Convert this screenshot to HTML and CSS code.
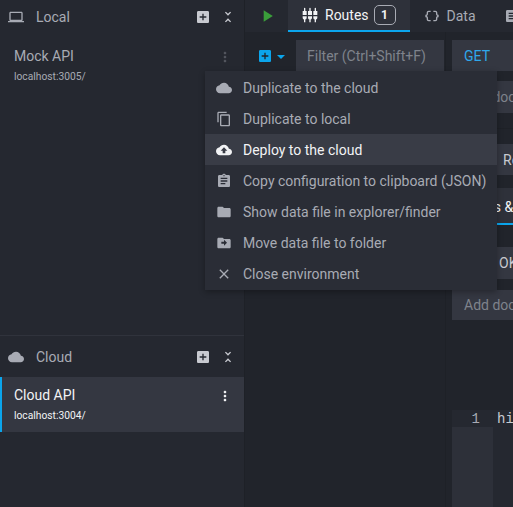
FILE: index.html
```html
<!DOCTYPE html>
<html lang="en">

<head>
    <meta charset="UTF-8">
    <title>Environments</title>
    <link rel="stylesheet" href="styles.css">
</head>

<body>
    <div class="app">
        <aside class="sidebar">
            <section class="env-group env-group-local">
                <header class="group-head">
                    <svg class="icon group-icon" viewBox="0 0 24 24"><path d="M20 18c1.1 0 1.99-.9 1.99-2L22 6c0-1.1-.9-2-2-2H4c-1.1 0-2 .9-2 2v10c0 1.1.9 2 2 2H0v2h24v-2h-4zM4 6h16v10H4V6z"/></svg>
                    <span class="group-title">Local</span>
                    <svg class="icon head-btn" viewBox="0 0 24 24"><path d="M19 3H5c-1.11 0-2 .9-2 2v14c0 1.1.89 2 2 2h14c1.1 0 2-.9 2-2V5c0-1.1-.9-2-2-2zm-2 10h-4v4h-2v-4H7v-2h4V7h2v4h4v2z"/></svg>
                    <svg class="icon head-btn" viewBox="0 0 24 24"><path d="M7.41 18.59L8.83 20 12 16.83 15.17 20l1.41-1.41L12 14l-4.59 4.59zm9.18-13.18L15.17 4 12 7.17 8.83 4 7.41 5.41 12 10l4.59-4.59z"/></svg>
                </header>
                <div class="env">
                    <div class="env-text">
                        <div class="env-name">Mock API</div>
                        <div class="env-host">localhost:3005/</div>
                    </div>
                    <svg class="icon env-more dim" viewBox="0 0 24 24"><path d="M12 8c1.1 0 2-.9 2-2s-.9-2-2-2-2 .9-2 2 .9 2 2 2zm0 2c-1.1 0-2 .9-2 2s.9 2 2 2 2-.9 2-2-.9-2-2-2zm0 6c-1.1 0-2 .9-2 2s.9 2 2 2 2-.9 2-2-.9-2-2-2z"/></svg>
                </div>
            </section>
            <section class="env-group env-group-cloud">
                <header class="group-head">
                    <svg class="icon group-icon" viewBox="0 0 24 24"><path d="M19.35 10.04C18.67 6.59 15.64 4 12 4 9.11 4 6.6 5.64 5.35 8.04 2.34 8.36 0 10.91 0 14c0 3.31 2.69 6 6 6h13c2.76 0 5-2.24 5-5 0-2.64-2.05-4.78-4.65-4.96z"/></svg>
                    <span class="group-title">Cloud</span>
                    <svg class="icon head-btn" viewBox="0 0 24 24"><path d="M19 3H5c-1.11 0-2 .9-2 2v14c0 1.1.89 2 2 2h14c1.1 0 2-.9 2-2V5c0-1.1-.9-2-2-2zm-2 10h-4v4h-2v-4H7v-2h4V7h2v4h4v2z"/></svg>
                    <svg class="icon head-btn" viewBox="0 0 24 24"><path d="M7.41 18.59L8.83 20 12 16.83 15.17 20l1.41-1.41L12 14l-4.59 4.59zm9.18-13.18L15.17 4 12 7.17 8.83 4 7.41 5.41 12 10l4.59-4.59z"/></svg>
                </header>
                <div class="env env-active">
                    <div class="env-text">
                        <div class="env-name">Cloud API</div>
                        <div class="env-host">localhost:3004/</div>
                    </div>
                    <svg class="icon env-more" viewBox="0 0 24 24"><path d="M12 8c1.1 0 2-.9 2-2s-.9-2-2-2-2 .9-2 2 .9 2 2 2zm0 2c-1.1 0-2 .9-2 2s.9 2 2 2 2-.9 2-2-.9-2-2-2zm0 6c-1.1 0-2 .9-2 2s.9 2 2 2 2-.9 2-2-.9-2-2-2z"/></svg>
                </div>
            </section>
        </aside>

        <main class="main">
            <nav class="tabs">
                <svg class="icon play" viewBox="0 0 24 24"><path d="M8 5v14l11-7z"/></svg>
                <div class="tab tab-active">
                    <svg class="icon tab-icon" viewBox="0 0 24 24"><path d="M5 2c0-.55-.45-1-1-1s-1 .45-1 1v4H1v6h6V6H5V2zm4 14c0 1.3.84 2.4 2 2.82V23h2v-4.18c1.16-.42 2-1.52 2-2.82v-2H9v2zm-8 0c0 1.3.84 2.4 2 2.82V23h2v-4.18C6.16 18.4 7 17.3 7 16v-2H1v2zM21 6V2c0-.55-.45-1-1-1s-1 .45-1 1v4h-2v6h6V6h-2zm-8-4c0-.55-.45-1-1-1s-1 .45-1 1v4H9v6h6V6h-2V2zm4 14c0 1.3.84 2.4 2 2.82V23h2v-4.18c1.16-.42 2-1.52 2-2.82v-2h-6v2z"/></svg>
                    <span>Routes</span>
                    <span class="count">1</span>
                </div>
                <div class="tab">
                    <svg class="icon tab-icon" viewBox="0 0 24 24"><path d="M4 7v2c0 .55-.45 1-1 1H2v4h1c.55 0 1 .45 1 1v2c0 1.65 1.35 3 3 3h3v-2H7c-.55 0-1-.45-1-1v-2c0-1.3-.84-2.42-2-2.83v-.34C5.16 11.42 6 10.3 6 9V7c0-.55.45-1 1-1h3V4H7C5.35 4 4 5.35 4 7zM21 10c-.55 0-1-.45-1-1V7c0-1.65-1.35-3-3-3h-3v2h3c.55 0 1 .45 1 1v2c0 1.3.84 2.42 2 2.83v.34c-1.16.41-2 1.52-2 2.83v2c0 .55-.45 1-1 1h-3v2h3c1.65 0 3-1.35 3-3v-2c0-.55.45-1 1-1h1v-4h-1z"/></svg>
                    <span>Data</span>
                </div>
                <div class="tab">
                    <svg class="icon tab-icon" viewBox="0 0 24 24"><path d="M19 3H5c-1.1 0-2 .9-2 2v14c0 1.1.9 2 2 2h14c1.1 0 2-.9 2-2V5c0-1.1-.9-2-2-2zm-5 14H7v-2h7v2zm3-4H7v-2h10v2zm0-4H7V7h10v2z"/></svg>
                </div>
            </nav>
            <div class="workspace">
                <div class="routes">
                    <div class="routes-head">
                        <svg class="icon add-route" viewBox="0 0 24 24"><path d="M19 3H5c-1.11 0-2 .9-2 2v14c0 1.1.89 2 2 2h14c1.1 0 2-.9 2-2V5c0-1.1-.9-2-2-2zm-2 10h-4v4h-2v-4H7v-2h4V7h2v4h4v2z"/></svg>
                        <span class="caret"></span>
                        <div class="field filter">Filter (Ctrl+Shift+F)</div>
                    </div>
                </div>
                <div class="detail">
                    <div class="field method">GET</div>
                    <div class="field doc">Add documentation</div>
                    <div class="rule"></div>
                    <div class="field status">Response 1</div>
                    <div class="sub-tabs"><span class="sub-tab">Status &amp; body</span></div>
                    <div class="field ok">200 OK</div>
                    <div class="field note">Add documentation</div>
                    <div class="editor">
                        <div class="gutter">
                            <div class="line-no">1</div>
                            <div class="gutter-rest"></div>
                        </div>
                        <div class="code">hi</div>
                    </div>
                </div>
            </div>
        </main>
    </div>

    <ul class="menu">
        <li class="menu-item">
            <svg class="icon" viewBox="0 0 24 24"><path d="M19.35 10.04C18.67 6.59 15.64 4 12 4 9.11 4 6.6 5.64 5.35 8.04 2.34 8.36 0 10.91 0 14c0 3.31 2.69 6 6 6h13c2.76 0 5-2.24 5-5 0-2.64-2.05-4.78-4.65-4.96z"/></svg>
            Duplicate to the cloud
        </li>
        <li class="menu-item">
            <svg class="icon" viewBox="0 0 24 24"><path d="M16 1H4c-1.1 0-2 .9-2 2v14h2V3h12V1zm3 4H8c-1.1 0-2 .9-2 2v14c0 1.1.9 2 2 2h11c1.1 0 2-.9 2-2V7c0-1.1-.9-2-2-2zm0 16H8V7h11v14z"/></svg>
            Duplicate to local
        </li>
        <li class="menu-item menu-item-hover">
            <svg class="icon" viewBox="0 0 24 24"><path d="M19.35 10.04C18.67 6.59 15.64 4 12 4 9.11 4 6.6 5.64 5.35 8.04 2.34 8.36 0 10.91 0 14c0 3.31 2.69 6 6 6h13c2.76 0 5-2.24 5-5 0-2.64-2.05-4.78-4.65-4.96zM14 13v4h-4v-4H7l5-5 5 5h-3z"/></svg>
            Deploy to the cloud
        </li>
        <li class="menu-item">
            <svg class="icon" viewBox="0 0 24 24"><path d="M19 3h-4.18C14.4 1.84 13.3 1 12 1c-1.3 0-2.4.84-2.82 2H5c-1.1 0-2 .9-2 2v14c0 1.1.9 2 2 2h14c1.1 0 2-.9 2-2V5c0-1.1-.9-2-2-2zm-7 0c.55 0 1 .45 1 1s-.45 1-1 1-1-.45-1-1 .45-1 1-1zm2 14H7v-2h7v2zm3-4H7v-2h10v2zm0-4H7V7h10v2z"/></svg>
            Copy configuration to clipboard (JSON)
        </li>
        <li class="menu-item">
            <svg class="icon" viewBox="0 0 24 24"><path d="M10 4H4c-1.1 0-1.99.9-1.99 2L2 18c0 1.1.9 2 2 2h16c1.1 0 2-.9 2-2V8c0-1.1-.9-2-2-2h-8l-2-2z"/></svg>
            Show data file in explorer/finder
        </li>
        <li class="menu-item">
            <svg class="icon" viewBox="0 0 24 24"><path d="M20 6h-8l-2-2H4c-1.1 0-2 .9-2 2v12c0 1.1.9 2 2 2h16c1.1 0 2-.9 2-2V8c0-1.1-.9-2-2-2zm-8 10v-3H8v-3h4V7l4.5 4.5L12 16z"/></svg>
            Move data file to folder
        </li>
        <li class="menu-item">
            <svg class="icon" viewBox="0 0 24 24"><path d="M19 6.41L17.59 5 12 10.59 6.41 5 5 6.41 10.59 12 5 17.59 6.41 19 12 13.41 17.59 19 19 17.59 13.41 12z"/></svg>
            Close environment
        </li>
    </ul>
</body>

</html>
```

FILE: styles.css
```css
html,
body {
    margin: 0;
    height: 100%;
    overflow: hidden;
}

body {
    background-color: #252830;
    color: #a8abb4;
    font-family: Roboto, "Liberation Sans", sans-serif;
    font-size: 14px;
}

.icon {
    display: block;
    flex: none;
    width: 16px;
    height: 16px;
    fill: currentColor;
}

.app {
    display: flex;
    height: 507px;
}

/* sidebar */
.sidebar {
    display: flex;
    flex-direction: column;
    width: 244px;
    flex: none;
    border-right: 1px solid #1e2127;
}

.env-group-local {
    flex: 1;
}

.env-group-cloud {
    height: 172px;
    box-sizing: border-box;
    border-top: 1px solid #30333c;
}

.group-head {
    display: flex;
    align-items: center;
    height: 41px;
    padding: 0 8px;
}

.env-group-local .group-head {
    height: 34px;
    margin-bottom: 4px;
}

.group-icon {
    margin-right: 12px;
}

.group-title {
    flex: 1;
}

.head-btn {
    margin-right: 9px;
    color: #c8cad0;
}

.head-btn:last-child {
    margin-right: 0;
}

.env {
    display: flex;
    align-items: flex-start;
    justify-content: space-between;
    height: 55px;
    padding: 7px 11px 0 14px;
    box-sizing: border-box;
}

.env-name {
    line-height: 22px;
}

.env-host {
    font-size: 10.25px;
    line-height: 20px;
}

.env-more {
    margin-top: 4px;
}

.dim {
    opacity: 0.35;
}

.env-active {
    background-color: #343741;
    border-left: 2px solid #0ba5ec;
    padding-left: 12px;
    color: #f2f3f5;
}

/* top tabs */
.main {
    flex: 1;
    display: flex;
    flex-direction: column;
    min-width: 0;
}

.tabs {
    display: flex;
    align-items: stretch;
    height: 32px;
    padding-left: 12px;
    box-sizing: border-box;
}

.play {
    align-self: center;
    width: 20px;
    height: 20px;
    margin-right: 11px;
    color: #3a9e3a;
}

.tab {
    display: flex;
    align-items: center;
    gap: 7px;
    padding: 0 14px;
    white-space: nowrap;
}

.tab-active {
    background-color: #2e313a;
    border-bottom: 2px solid #0ba5ec;
    color: #f2f3f5;
}

.count {
    width: 22px;
    margin-left: -2px;
    box-sizing: border-box;
    border: 1px solid #a8abb4;
    border-radius: 5px;
    font-size: 12px;
    font-weight: bold;
    line-height: 18px;
    text-align: center;
}

/* routes and route detail */
.workspace {
    flex: 1;
    display: flex;
    min-height: 0;
    background-color: #21242b;
}

.routes {
    width: 200px;
    flex: none;
    border-right: 1px solid #1e2127;
}

.routes-head {
    display: flex;
    align-items: flex-start;
    padding-top: 8px;
}

.add-route {
    margin: 8px 0 0 12px;
    color: #0ba5ec;
}

.caret {
    width: 0;
    height: 0;
    margin: 15px 11px 0 4px;
    border-left: 4px solid transparent;
    border-right: 4px solid transparent;
    border-top: 4px solid #0ba5ec;
}

.field {
    display: flex;
    align-items: center;
    box-sizing: border-box;
    height: 31px;
    padding: 0 12px;
    background-color: #343741;
    white-space: nowrap;
    overflow: hidden;
}

.filter {
    flex: 1;
    margin-right: 1px;
    padding-left: 11px;
    color: #7f838c;
}

.detail {
    flex: 1;
    display: flex;
    flex-direction: column;
    min-width: 0;
    padding: 8px 0 0 6px;
}

.method {
    color: #2fa8ec;
}

.doc {
    margin-top: 10px;
    height: 32px;
    color: #7f838c;
}

.rule {
    height: 1px;
    margin-top: 15px;
    background-color: #1e2127;
}

.status {
    margin-top: 15px;
    padding-left: 51px;
    color: #c8cad0;
}

.sub-tabs {
    display: flex;
    align-items: flex-end;
    height: 50px;
    white-space: nowrap;
}

.sub-tab {
    padding: 11px 10px 8px 9px;
    background-color: #2e313a;
    color: #f2f3f5;
    border-bottom: 2px solid #0ba5ec;
}

.ok {
    margin-top: 22px;
    height: 32px;
    padding-left: 20px;
    color: #c8cad0;
}

.note {
    margin-top: 11px;
    height: 30px;
    color: #7f838c;
}

.editor {
    flex: 1;
    display: flex;
    margin-top: 90px;
    background-color: #252830;
    font-family: "Liberation Mono", monospace;
}

.gutter {
    display: flex;
    flex-direction: column;
    width: 41px;
    flex: none;
    background-color: #2d3039;
}

.line-no {
    height: 17px;
    line-height: 18px;
    padding-right: 13px;
    text-align: right;
    background-color: #252830;
}

.gutter-rest {
    flex: 1;
}

.code {
    padding-left: 4px;
    line-height: 18px;
    color: #c8cad0;
}

/* context menu */
.menu {
    position: absolute;
    left: 205px;
    top: 71px;
    width: 292px;
    margin: 0;
    padding: 1px 0;
    box-sizing: border-box;
    list-style: none;
    background-color: #2a2d36;
    box-shadow: 0 2px 6px rgba(0, 0, 0, 0.3);
}

.menu-item {
    display: flex;
    align-items: center;
    gap: 11px;
    height: 31px;
    padding-left: 11px;
    white-space: nowrap;
}

.menu-item-hover {
    background-color: #393c46;
    color: #f2f3f5;
}
```
